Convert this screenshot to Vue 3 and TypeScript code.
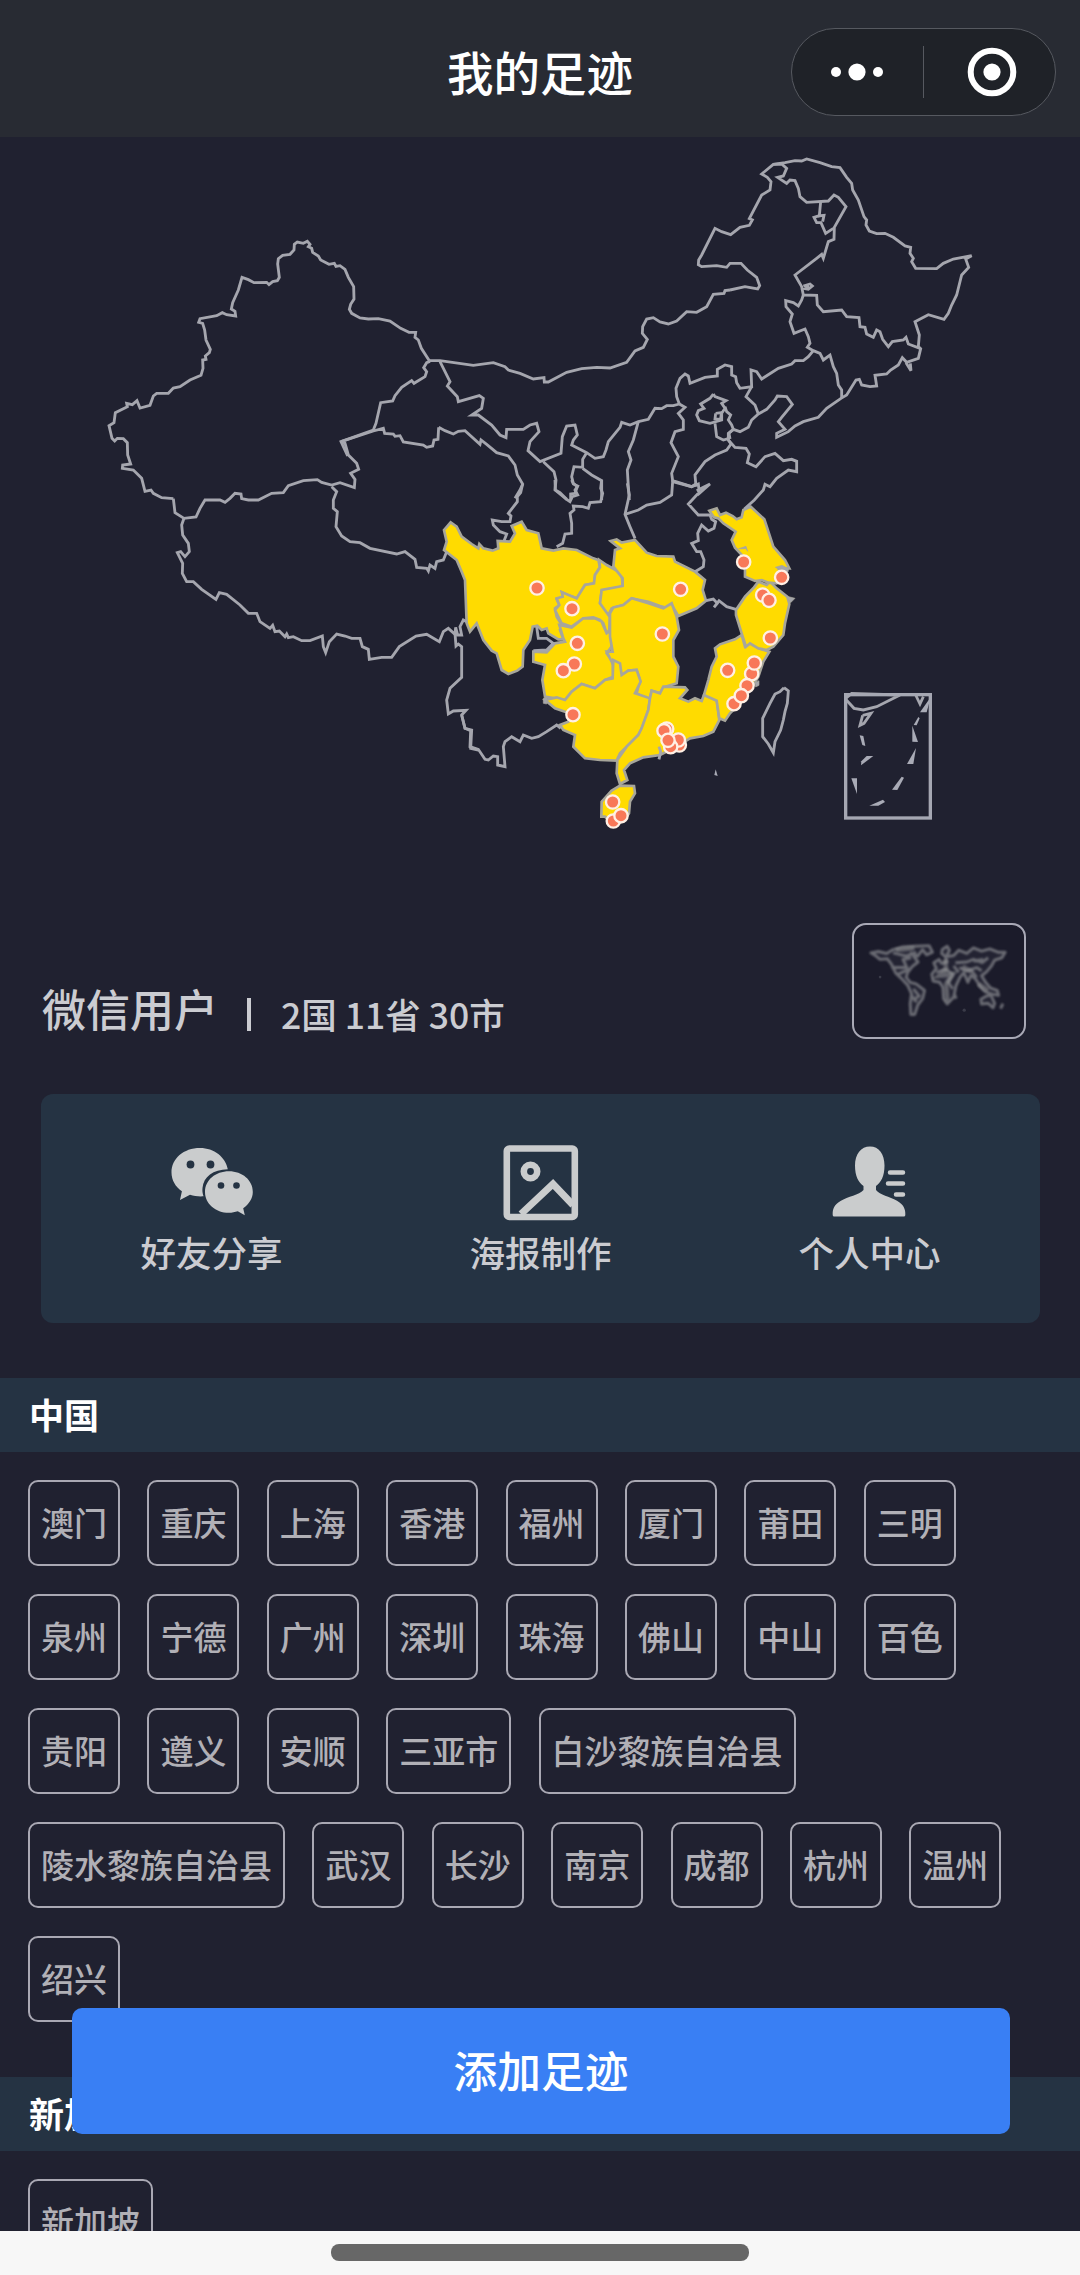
<script setup lang="ts">
interface MapSheet {
  x: number
  y: number
  lines: string[]
}

interface Country {
  name: string
  cities: string[]
}

// Borders are stored per sheet: an origin on the map plus points in thirds of a pixel.
const sheets: MapSheet[] = [
  {
    x: 90,
    y: 140,
    lines: [
      '1018,662 994,625 985,600 975,592 977,577 957,577 932,565 900,543 865,536 835,537 810,534 785,520 778,508 782,493 792,477 791,440 775,412 765,388 750,377 738,379 733,370 717,373 692,360 685,348 668,337 665,325 655,320 660,313 652,304 640,310 622,306 613,313 612,330 600,343 578,346 565,356 563,372 568,412 562,422 548,425 537,434 530,427 492,428 475,419 456,412 445,450 428,488 424,507 435,514 437,528 410,524 397,518 380,527 330,536 326,547 338,550 344,570 348,600 361,628 358,638 346,648 348,658 338,660 339,685 333,706 300,720 270,740 250,744 235,760 200,760 190,768 180,796 150,804 141,782 127,794 110,790 112,800 76,818 72,848 57,857 66,895 74,903 82,895 100,896 112,908 113,945 122,972 98,975 97,985 130,990 155,1015 165,1054 183,1050 190,1060 215,1073 250,1076',
      '1020,664 1010,668 1001,683 1010,695 1005,710 972,730 965,722 935,742 915,767 908,783 872,788 858,850 850,870 753,905 773,948',
      '753,905 850,873 880,865 884,880 910,882 915,889 930,887 940,906 1000,915 1010,922 1028,918 1032,900 1044,898 1046,862',
    ],
  },
  {
    x: 400,
    y: 140,
    lines: [
      '88,662 120,662 220,676 280,668 315,680 325,690 360,700 400,717 432,713 433,726 445,726 500,697 545,686 590,682 630,684 680,667 705,633 730,622 742,598 727,580 728,560 740,537 760,533 780,546 805,552 830,543 860,515 890,517 920,500 940,463 972,460 975,452 990,450',
      '116,862 135,872 160,882 175,874 195,872 240,913 243,900 260,913 290,938 325,948 345,975 352,1005 368,1032 360,1050 345,1075',
      '838,792 820,797 800,797 785,806 765,805 745,838 715,845 690,855 665,847 660,862 625,905 618,930 610,950 585,955 560,938 515,915 520,900 532,885 525,855 500,858 487,890 483,940 420,965 384,932 390,905 417,875 410,850 390,855 370,868 320,868 318,893 300,885 275,855 235,825 215,825 245,805 250,775 238,767 175,785 172,770 142,738 150,725 120,665',
      '838,792 855,802 835,820 850,840 850,868 825,875 813,908 835,950 815,1000 818,1022 875,1040 890,1030',
      '715,845 700,900 685,935 693,960 682,990 685,1040 688,1080',
      '430,965 462,995 468,1020 465,1050 500,1078',
      '560,938 548,958 548,982 522,980 515,1010 520,1030 532,1040 525,1060 512,1062 512,1080',
      '548,985 575,1005 605,1022 605,1080',
    ],
  },
  {
    x: 660,
    y: 140,
    lines: [
      '210,450 255,440 293,447 299,437 290,412 262,390 243,370 210,370 200,382 170,377 125,380 115,374 116,360 125,345 165,265 185,275 212,284 240,262 268,256 277,240 268,236 305,165 330,150 333,125 322,112 305,102 340,73 375,68 405,62 425,63 440,57 480,68 515,80 540,83 560,112 575,130 578,150 595,180 612,230 620,240 618,255 628,273 650,281 675,280 700,292 735,318 752,322 750,340 760,355 755,365 767,385 830,386 850,370 880,357 935,347 917,357 926,382 905,405 890,465 875,495 865,520 852,538 805,524 765,545 778,585 775,620 782,626 775,655 740,667 727,653 715,675 692,690 680,702 645,706 650,738 630,740 605,735 598,718 588,720 560,765 543,775 500,805 475,832 430,845 405,858 385,875 350,892 350,880 375,868 355,845 365,832 397,793 380,770 352,768 345,780 320,808 295,822 275,840 265,862 240,875 220,868 205,880 205,900 225,922 258,925 268,942 262,968 288,980 315,950 345,940 370,962 395,958 410,964 410,995 385,990 350,1015 330,1040 315,1033 310,1050 283,1080 253,1107',
      '738,668 753,692 751,670',
      '340,73 365,72 380,85 370,108 353,112 380,130 390,120 405,122 415,145 420,170 440,187 505,183 522,165 535,172 558,200 523,262 522,298 505,305 490,355 485,343 470,355 405,405 425,440 430,465 470,466 472,495 490,515 545,510 560,530 597,533 600,560 615,562 620,582 640,592 650,570 660,575 668,598 685,620 697,605 730,600 738,592 745,612 782,626',
      '482,185 478,227 462,232 470,248 483,248 497,280 520,265',
      '474,228 492,226 488,245',
      '430,438 450,432 457,438 445,448 435,446 448,440',
      '430,465 425,480 415,498 400,488 377,482 378,500 397,522 390,545 402,580 435,567 445,590 450,610 442,622 460,632 480,640 490,660 510,645 520,680 530,700 535,735 545,750 545,775',
      '460,632 445,650 430,662 405,662 395,672 355,685 305,717 290,695 273,690 275,740 240,745 230,728 227,710 215,705 215,680 195,675 172,688 172,708 135,712 90,730 85,708 75,702 60,715 48,745 50,770 58,792',
      '275,740 258,770 285,795 295,822',
      '108,1040 105,1005 135,965 165,945 200,930 213,912 205,900',
      '160,762 165,770 198,782 185,790 195,805 185,820 185,840 150,850 118,842 110,825 115,812 132,805 122,792 150,775 160,762',
      '195,800 200,815 212,825 205,840 215,855 220,868 207,880 210,897',
      '165,850 170,890 190,900 207,895',
      '167,820 184,818 182,838 165,837 167,820',
    ],
  },
  {
    x: 160,
    y: 440,
    lines: [
      '40,176 45,218 72,235 108,231 120,205 135,180 180,180 195,187 210,175 225,160 243,162 245,176 265,180 295,180 335,160 370,158 385,137 430,122 472,119 485,127 515,135 540,128 583,143 585,118 572,100 596,88 590,70 565,45 555,10 545,5',
      '72,235 65,255 68,285 85,310 88,335 75,350 62,335 52,338 68,370 67,400 80,425 100,425 125,448 168,478 178,458 200,463 240,495 265,520 290,520 300,545 330,565 338,556 345,575 358,573 375,590 380,582 385,593 400,590 425,602 450,602 487,588 490,620 497,638 508,605 530,582 555,588 575,595 600,595 607,620 625,628 628,658 665,652 695,652 718,620 768,588 800,583 838,605 850,575 865,565 885,583 887,562 893,585 905,585 900,560 910,540 920,545',
      '515,140 530,155 520,180 520,205 532,215 528,260 545,288 570,305 600,308 630,325 710,342 735,335 765,358 770,382 800,385 805,393 810,375 825,385 830,365 850,360 860,335',
      '885,580 888,618 895,612 905,620 905,680 905,712 870,745 860,780 865,822 880,813 918,811 905,825 915,865 935,870 932,925 955,930',
    ],
  },
  {
    x: 430,
    y: 480,
    lines: [
      '278,12 272,38 262,50 262,65 235,100 243,108 240,125 215,125 187,120 190,135 210,155 230,162 222,183',
      '375,0 376,30 390,38 410,58 420,65 427,50 443,45 435,30 443,18 430,12 425,0',
      '515,0 512,25 518,40 512,65 480,68 475,85 458,80 430,78 432,90 420,100 425,130 425,160 405,162 398,190 380,200',
      '592,10 598,45 585,103 600,140 615,175',
      '585,103 625,90 650,75 690,67 725,45 728,5 785,20 805,12 808,40 840,12 820,22 800,32',
      '805,40 775,72 805,105 840,105 845,118 857,125 852,145 835,153 815,135 803,160 805,182 785,190 800,215 812,215 822,240 820,260 795,275',
      '828,362 850,357 862,370 852,382 867,362 890,380 918,388',
      '320,440 325,475 350,475 370,490 350,510 310,512',
      '95,705 105,745 122,752 120,800 145,808 165,838 175,840 190,828 203,830 203,855 225,860 220,800 225,785 245,770 270,785 280,765 305,775 325,770 350,755 380,735 392,745',
      '687,800 692,815 687,838',
    ],
  },
  {
    x: 660,
    y: 640,
    lines: [
      '372,143 385,153 382,190 375,215 370,240 362,270 345,305 340,338 325,312 308,290 308,235 330,190 345,162 360,155 372,143',
      '557,175 575,160 720,165 650,200 610,210 582,205 557,178',
      '767,165 780,192 790,170',
      '608,226 633,220 612,250 600,256 608,226',
    ],
  },
]

const visited: string[] = [
  // Sichuan
  '62,127 80,140 95,170 125,192 145,205 148,192 160,205 188,212 205,205 203,183 240,185 255,160 245,138 275,125 290,150 325,160 335,205 370,212 400,205 440,210 490,235 505,240 510,262 495,285 492,310 465,315 440,355 412,345 396,337 400,350 380,358 388,375 375,385 380,410 392,430 410,440 390,450 400,478 385,478 355,460 350,445 335,450 322,437 308,440 300,480 280,510 278,560 262,572 235,582 215,570 200,520 185,512 160,480 140,430 120,455 110,430 105,300 95,275 80,240 42,210 50,185 42,150',
  // Chongqing
  '508,240 530,255 575,280 578,320 515,332 510,370 540,400 538,450 530,460 520,430 510,420 490,412 460,415 425,440 395,430 375,390 388,375 380,355 398,350 396,337 440,355 465,315 492,310 495,285 510,262',
  // Guizhou
  '310,515 350,517 375,490 405,485 400,475 388,435 425,443 460,415 495,415 515,425 530,460 545,450 545,500 530,520 548,545 550,590 525,600 495,625 455,612 425,635 405,660 345,650 337,600 345,555 310,545',
  // Hubei
  '542,183 560,178 575,188 615,180 650,218 680,228 730,230 735,245 795,275 825,300 818,330 828,362 800,385 745,408 725,375 715,385 690,378 655,365 605,355 580,375 545,385 535,405 510,370 515,330 578,318 578,295 550,260 555,210 570,205',
  // Hunan
  '540,400 550,382 580,375 605,355 655,370 700,385 725,370 740,410 747,450 730,480 730,530 745,560 740,610 700,622 690,640 665,632 658,660 620,640 630,600 620,570 595,572 575,585 550,555 530,515 548,515 540,470',
  // Guangxi
  '345,660 380,652 405,660 425,635 455,612 495,625 525,600 548,595 550,540 570,550 575,585 595,572 620,570 632,605 615,640 660,655 655,690 635,745 625,765 590,800 570,820 560,842 510,840 465,835 430,800 435,765 400,750 390,735 415,725 420,700 405,695 375,685',
  // Guangdong
  '660,655 665,632 690,640 700,620 765,622 772,630 750,655 775,665 795,655 815,663 822,645 860,660 868,720 850,755 820,768 780,775 740,800 690,825 640,832 600,850 582,870 592,900 570,912 560,880 562,840 590,800 625,765 635,745 655,690',
  // Hainan
  '545,932 570,917 612,918 615,940 600,965 597,1000 580,1025 550,1032 525,1010 514,1010 515,965',
  // Fujian
  '935,465 945,500 960,490 985,505 1018,515 1000,545 985,590 970,615 940,660 900,700 885,722 868,715 860,662 822,645 835,600 845,560 860,530 855,505 870,493 915,478',
  // Zhejiang
  '972,322 985,305 1010,315 1020,305 1040,325 1072,350 1078,372 1065,430 1060,465 1030,500 1010,510 985,505 960,490 948,500 935,460 918,405 918,390 945,350',
  // Jiangsu
  '838,92 860,85 870,105 888,98 908,108 920,118 935,112 940,90 962,80 1003,118 1030,200 1065,240 1078,265 1045,265 1060,290 1040,310 1015,308 995,300 975,303 945,290 945,262 940,230 915,203 905,180 917,155 880,130 865,115 852,112',
]

const dashes: string[] = [
  '812,172 800,217 780,217',
  '599,286 610,288 616,318 607,315',
  '603,376 604,364 620,348 640,348',
  '574,415 591,415 591,462',
  '628,497 669,479 675,486 655,497',
  '696,449 725,410 732,413 712,450',
  '741,372 768,324 760,372',
  '761,255 775,231 779,235 770,256',
  '757,257 774,306 757,305',
  '163,405 167,388 173,408',
]

const markers: [number, number][] = [
  [321, 324], [426, 386], [752, 328], [697, 462], [442, 490], [433, 552], [400, 572], [429, 704],
  [941, 246], [1055, 292], [998, 345], [1017, 361], [1021, 474], [893, 571], [965, 581], [973, 549],
  [951, 617], [912, 671], [934, 647], [710, 747], [702, 752], [748, 795], [745, 780], [722, 800],
  [714, 781], [548, 966], [550, 1023], [573, 1007],
]

const actions = [
  { key: 'share', label: '好友分享' },
  { key: 'poster', label: '海报制作' },
  { key: 'profile', label: '个人中心' },
]

const countries: Country[] = [
  {
    name: '中国',
    cities: [
      '澳门', '重庆', '上海', '香港', '福州', '厦门', '莆田', '三明',
      '泉州', '宁德', '广州', '深圳', '珠海', '佛山', '中山', '百色',
      '贵阳', '遵义', '安顺', '三亚市', '白沙黎族自治县',
      '陵水黎族自治县', '武汉', '长沙', '南京', '成都', '杭州', '温州', '绍兴',
    ],
  },
  { name: '新加坡', cities: ['新加坡'] },
]

const place = (x: number, y: number): string => `translate(${x} ${y}) scale(0.33333)`
</script>

<template>
  <div class="phone">
    <header class="navbar">
      <h1 class="title">我的足迹</h1>
      <div class="capsule">
        <svg class="dots" viewBox="0 0 52 20">
          <circle cx="5" cy="10" r="5" /><circle cx="26" cy="10" r="8.6" /><circle cx="47" cy="10" r="5" />
        </svg>
        <span class="divider"></span>
        <svg class="target" viewBox="0 0 50 50">
          <circle cx="25" cy="25" r="21.3" fill="none" stroke="#fff" stroke-width="6" />
          <circle cx="25" cy="25" r="8.6" />
        </svg>
      </div>
    </header>

    <main class="content">
      <svg class="map" viewBox="0 137 1080 763">
        <g :transform="place(430, 480)" class="visited">
          <polygon v-for="(area, i) in visited" :key="i" :points="area" />
          <polygon class="coast" points="1068,348 1095,355 1082,368" />
          <path class="coast" d="M926 206l22-7 5 15-5-8zM1036 262l20-6 20 10-2 10zM975 608l12-6v14l-10 5zM340 655l12-3-2 20-10-2z" />
        </g>
        <g v-for="(sheet, i) in sheets" :key="i" :transform="place(sheet.x, sheet.y)" class="border">
          <polyline v-for="(line, j) in sheet.lines" :key="j" :points="line" />
        </g>
        <g :transform="place(660, 640)">
          <rect class="inset" x="557" y="164" width="254" height="370" />
          <polygon v-for="(dash, i) in dashes" :key="i" class="dash" :points="dash" />
        </g>
        <g :transform="place(430, 480)" class="marker">
          <circle v-for="([x, y], i) in markers" :key="i" :cx="x" :cy="y" r="20" />
        </g>
      </svg>

      <section class="user">
        <span class="name">微信用户</span>
        <span class="bar"></span>
        <span class="stats">2国 11省 30市</span>
        <div class="world">
          <svg viewBox="0 0 516 342">
            <g transform="translate(-42 -45)">
              <g class="land">
                <path d="M92 130L115 126 140 132 160 120 190 112 225 110 270 108 280 128 262 136 250 120 235 140 215 130 236 158 218 172 204 190 200 205 212 220 230 225 256 245 250 270 235 290 226 318 214 318 212 285 216 255 205 230 185 208 168 192 155 165 142 148 120 150 108 140Z" />
                <path d="M155 175H205M175 195L205 182 190 150 215 145M160 130L200 140 230 128M222 240L240 262 220 275M215 260L232 280" />
                <path d="M310 120L325 110 332 122 322 142 345 138 360 122 385 132 405 115 430 125 455 118 480 128 502 128 492 145 470 152 460 170 445 188 430 200 442 220 458 238 478 245 482 260 462 256 440 248 425 232 412 210 398 198 388 220 376 190 364 205 352 230 345 265 325 286 314 270 312 235 302 220 282 216 278 195 292 178 284 160 300 150 308 162 325 158 318 140 308 132Z" />
                <path d="M350 160L385 158 405 150 432 160 450 145M362 175L385 185 415 175 430 185M292 190L320 180 342 195 328 220 342 240M345 170L360 190M395 178L415 205M405 155L435 150" />
                <path d="M428 272L445 262 458 258 470 284 465 298 450 284 430 286ZM488 300L495 285M348 258L352 270" />
              </g>
              <path class="core" d="M168 122L225 116M318 150L322 180 300 200 342 195 322 225 326 278M420 225L450 245M372 172L400 188" />
              <circle cx="120" cy="204" r="4" class="speck" /><circle cx="377" cy="305" r="5" class="speck" />
            </g>
          </svg>
        </div>
      </section>

      <nav class="actions">
        <a v-for="action in actions" :key="action.key" class="action">
          <svg v-if="action.key === 'share'" class="icon" viewBox="0 0 84 76">
            <path d="M30 3C13.500 3 1.500 13.600 1.500 27.500c0 7.800 4 14.300 10.400 18.700L10 55l10-5.300c4.300 1.200 8.500 2 13.500 1.600-1-3.200-1.300-5.700-1-8.400C33.600 32 43 24.400 57.800 24.300 55.500 12 44.200 3 30 3z" />
            <path d="M59 26.300c-13.500 0-24 8.900-24 20.600S45.500 67.700 59 67.700c3 0 6-.7 8.800-1.500l7 4-1.600-7c5.700-4 9.600-9.800 9.600-16.300 0-11.700-10.600-20.600-23.800-20.600z" />
            <g class="hole"><circle cx="20.500" cy="19.500" r="3.900" /><circle cx="40.500" cy="19.500" r="3.900" /><circle cx="51" cy="40.500" r="3.300" /><circle cx="66.500" cy="40.500" r="3.300" /></g>
          </svg>
          <svg v-else-if="action.key === 'poster'" class="icon" viewBox="0 0 84 76">
            <g fill="none" stroke="#cacccd" stroke-width="6.600">
              <rect x="7.800" y="3.500" width="68" height="68.500" rx="2.500" />
              <circle cx="31.500" cy="26.500" r="6.700" />
              <path d="M22 69l32-30 20 21" stroke-width="7" />
            </g>
          </svg>
          <svg v-else class="icon" viewBox="0 0 84 76">
            <path d="M42 1.500c-9 0-15 7.500-15 19 0 10.500 3.500 17 8.500 20.500v4C31 50 20 51.500 12.500 56 6 60 4.500 64 4.700 70c.1 1 .8 1.500 1.800 1.500h69c1 0 1.700-.5 1.800-1.500.4-6-1.800-10.500-8.300-14.300C61.500 51.500 52 50 48 45v-4c5-3.500 8.500-10 8.500-20.500 0-11.500-5.500-19-14.500-19z" />
            <g stroke="#cacccd" stroke-width="4.500" stroke-linecap="round"><path d="M62 27.500h13M60 38.500h15M68 49.500h7" /></g>
          </svg>
          <span>{{ action.label }}</span>
        </a>
      </nav>

      <section v-for="country in countries" :key="country.name" class="country">
        <h2 class="country-name">{{ country.name }}</h2>
        <ul class="cities">
          <li v-for="city in country.cities" :key="city" class="city">{{ city }}</li>
        </ul>
      </section>
    </main>

    <button class="add">添加足迹</button>

    <footer class="home"><span class="indicator"></span></footer>
  </div>
</template>

<style>
body {
  margin: 0;
  background: #202130;
}
</style>

<style scoped>
.phone {
  position: relative;
  display: flex;
  flex-direction: column;
  width: 1080px;
  height: 2275px;
  overflow: hidden;
  background: #202130;
  font-family: "Noto Sans CJK SC", sans-serif;
  color: #cbccd1;
}
.navbar {
  display: grid;
  grid-template-columns: 1fr auto 1fr;
  align-items: center;
  flex: none;
  box-sizing: border-box;
  height: 137px;
  padding: 7px 24px 0;
  background: #282b33;
}
.title {
  grid-column: 2;
  margin: 0 0 3px;
  font-size: 46.5px;
  font-weight: 500;
  line-height: 60px;
  color: #fff;
}
.capsule {
  justify-self: end;
  display: flex;
  align-items: center;
  box-sizing: border-box;
  width: 265px;
  height: 88px;
  border: 1px solid #565960;
  border-radius: 44px;
  background: #1f2228;
}
.dots {
  width: 52px;
  height: 20px;
  margin-left: 39px;
  fill: #fff;
}
.divider {
  width: 1px;
  height: 52px;
  margin-left: 40px;
  background: #565960;
}
.target {
  width: 50px;
  height: 50px;
  margin-left: 43px;
  fill: #fff;
}
.content {
  flex: 1;
  min-height: 0;
  overflow: hidden;
}
.map {
  display: block;
  width: 1080px;
  height: 763px;
}
.visited {
  fill: #ffdb00;
  stroke: #a7a69b;
  stroke-width: 8;
}
.visited .coast {
  fill: #a5a6ab;
  stroke-width: 2;
}
.border {
  fill: none;
  stroke: #a5a6ae;
  stroke-width: 8.5;
  stroke-linejoin: miter;
}
.inset {
  fill: none;
  stroke: #a5a7b2;
  stroke-width: 10;
}
.dash {
  fill: #a9abb6;
}
.marker {
  fill: #f87858;
  stroke: #fff0e4;
  stroke-width: 7;
}
.user {
  display: flex;
  align-items: flex-start;
  height: 171px;
  padding: 23px 54px 0 42px;
}
.name {
  margin-top: 55px;
  font-size: 44px;
  font-weight: 500;
  line-height: 60px;
}
.bar {
  width: 4px;
  height: 33px;
  margin: 75px 30px 0 29px;
  background: #cbccd1;
}
.stats {
  margin-top: 66px;
  font-size: 35.5px;
  font-weight: 500;
  line-height: 50px;
  white-space: nowrap;
}
.world {
  box-sizing: border-box;
  width: 174px;
  height: 116px;
  margin-left: auto;
  border: 2px solid #a9a9b6;
  border-radius: 14px;
  background: #1b1b2a;
  overflow: hidden;
}
.world svg {
  display: block;
  width: 100%;
  height: 100%;
}
.land {
  fill: rgba(110, 111, 120, 0.12);
  stroke: #74757c;
  stroke-width: 9;
  stroke-linejoin: round;
  opacity: 0.9;
  filter: blur(3px);
}
.core {
  fill: none;
  stroke: #9a9b9c;
  stroke-width: 14;
  opacity: 0.5;
  filter: blur(4px);
}
.speck {
  fill: #3a3b48;
}
.actions {
  display: flex;
  box-sizing: border-box;
  width: 999px;
  height: 229px;
  margin: 0 0 55px 41px;
  padding: 51px 6px 0;
  border-radius: 12px;
  background: #253343;
}
.action {
  display: flex;
  flex-direction: column;
  align-items: center;
  flex: 1;
  font-size: 35.5px;
  font-weight: 500;
  line-height: 50px;
}
.icon {
  width: 84px;
  height: 76px;
  margin-bottom: 6px;
  fill: #cacccd;
}
.hole {
  fill: #253343;
}
.country {
  margin-bottom: 55px;
}
.country-name {
  height: 74px;
  margin: 0;
  padding-left: 29px;
  background: #253343;
  font-size: 35px;
  font-weight: 700;
  line-height: 71px;
  color: #fff;
}
.cities {
  display: flex;
  flex-wrap: wrap;
  gap: 28px 27.4px;
  margin: 0;
  padding: 28px 28px 0;
  list-style: none;
}
.city {
  box-sizing: border-box;
  height: 86px;
  padding: 0 11px;
  border: 2px solid #a9a8b3;
  border-radius: 10px;
  font-size: 33px;
  font-weight: 500;
  line-height: 80px;
  color: #b1b0b6;
  white-space: nowrap;
}
.add {
  position: absolute;
  left: 72px;
  top: 2008px;
  width: 938px;
  height: 126px;
  padding: 0 0 4px;
  border: 0;
  border-radius: 10px;
  background: #397ff4;
  font: 500 43.700px/122px "Noto Sans CJK SC", sans-serif;
  color: #fff;
}
.home {
  display: flex;
  justify-content: center;
  flex: none;
  box-sizing: border-box;
  height: 44px;
  padding-top: 13px;
  background: #f7f7f7;
}
.indicator {
  width: 418px;
  height: 17px;
  border-radius: 8px;
  background: #676767;
}
</style>
